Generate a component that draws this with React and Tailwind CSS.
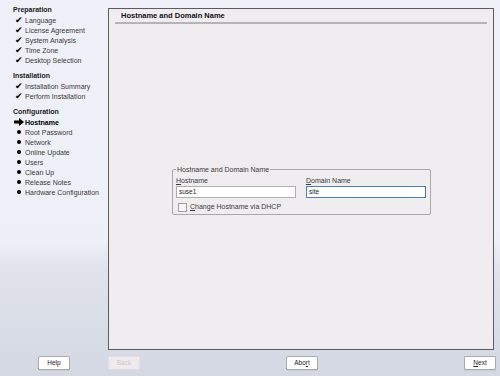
const font = { fontFamily: '"Liberation Sans", Arial, sans-serif' };

const Arrow = () => (
  <svg width="10" height="8" viewBox="0 0 10 8">
    <path d="M0 2.6h5V0l5 4-5 4V5.4H0z" fill="#000" />
  </svg>
);

const Step = ({ mark, label, bold }) => (
  <div className="flex items-center h-[10px]">
    <span className="w-[12px] flex justify-center text-[9px] leading-none text-black">
      {mark === 'arrow' ? <Arrow /> : mark === 'dot' ? <span className="w-[3.5px] h-[3.5px] rounded-full bg-black" /> : mark}
    </span>
    <span className={`text-[7px] leading-none ${bold ? 'font-bold text-black' : 'text-[#3a3a3a]'}`}>{label}</span>
  </div>
);

const Heading = ({ children }) => (
  <div className="text-[7px] font-bold text-[#222] h-[10px] flex items-center">{children}</div>
);

const Button = ({ children, disabled }) => (
  <div
    className={`w-[32px] h-[14px] flex items-center justify-center text-[6.5px] border rounded-[1px] ${
      disabled ? 'border-[#e2dde2] bg-[#efeaee] text-[#cfc8cf]' : 'border-[#a9a9a9] bg-white text-[#222] shadow-[0_1px_0_#c8ccd4]'
    }`}
  >
    {children}
  </div>
);

export default function App() {
  return (
    <div
      style={font}
      className="w-[500px] h-[376px] flex flex-col bg-[linear-gradient(to_bottom,#eff0f8_0%,#eef0f7_64%,#e0e3ec_72%,#d3d8e2_100%)]"
    >
      <div className="flex h-[351px]">
        {/* Sidebar */}
        <div className="w-[108px] pl-[13px] pt-[5px]">
          <Heading>Preparation</Heading>
          <Step mark="✔" label="Language" />
          <Step mark="✔" label="License Agreement" />
          <Step mark="✔" label="System Analysis" />
          <Step mark="✔" label="Time Zone" />
          <Step mark="✔" label="Desktop Selection" />
          <div className="h-[6px]" />
          <Heading>Installation</Heading>
          <Step mark="✔" label="Installation Summary" />
          <Step mark="✔" label="Perform Installation" />
          <div className="h-[6px]" />
          <Heading>Configuration</Heading>
          <Step mark="arrow" label="Hostname" bold />
          <Step mark="dot" label="Root Password" />
          <Step mark="dot" label="Network" />
          <Step mark="dot" label="Online Update" />
          <Step mark="dot" label="Users" />
          <Step mark="dot" label="Clean Up" />
          <Step mark="dot" label="Release Notes" />
          <Step mark="dot" label="Hardware Configuration" />
        </div>

        {/* Main panel */}
        <div className="mt-[8px] w-[386px] h-[342px] border border-[#5c5c5c] bg-[#f0edf0] flex flex-col">
          <div className="pl-[12px] pt-[1px] text-[7.5px] font-bold text-[#111]">Hostname and Domain Name</div>
          <div className="mx-[6px] mt-[1px] h-[2px] bg-[#b4b4b8]" />

          <fieldset className="ml-[63px] mt-[142px] w-[259px] h-[49px] border border-[#a8a8a8] rounded-[2px] px-[3px]">
            <legend className="text-[7px] text-[#3a3a3a] px-[1px] leading-none">Hostname and Domain Name</legend>
            <div className="flex gap-[10px] mt-[4px]">
              <div className="w-[120px]">
                <div className="text-[7px] text-[#3a3a3a] leading-none h-[9px]">
                  <span className="underline">H</span>ostname
                </div>
                <div className="h-[12px] border border-[#b0b0b0] bg-white text-[6.5px] text-[#222] flex items-center px-[2px]">suse1</div>
              </div>
              <div className="w-[120px]">
                <div className="text-[7px] text-[#3a3a3a] leading-none h-[9px]">
                  <span className="underline">D</span>omain Name
                </div>
                <div className="h-[12px] border border-[#4a7fc0] bg-white text-[6.5px] text-[#222] flex items-center px-[2px]">site</div>
              </div>
            </div>
            <div className="flex items-center mt-[4px] ml-[2px]">
              <div className="w-[9px] h-[9px] border border-[#a0a0a0] bg-[#f7f5f7]" />
              <span className="ml-[3px] text-[7px] text-[#3a3a3a]">
                <span className="underline">C</span>hange Hostname via DHCP
              </span>
            </div>
          </fieldset>
        </div>
      </div>

      {/* Bottom buttons */}
      <div className="flex items-center h-[25px] pb-[1px]">
        <div className="ml-[38px]">
          <Button>Help</Button>
        </div>
        <div className="ml-[38px]">
          <Button disabled>Back</Button>
        </div>
        <div className="ml-[146px]">
          <Button>
            Abo<span className="underline">r</span>t
          </Button>
        </div>
        <div className="ml-[146px]">
          <Button>
            <span className="underline">N</span>ext
          </Button>
        </div>
      </div>
    </div>
  );
}
